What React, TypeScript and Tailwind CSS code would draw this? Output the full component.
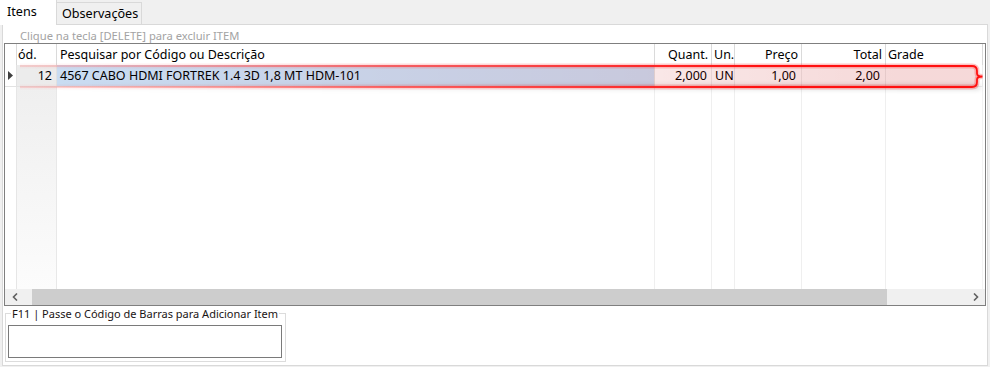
export default function App() {
  return (
    <div className="relative w-[990px] h-[367px] overflow-hidden bg-[#f0f0f0] font-['Noto_Sans',sans-serif] text-[12px] leading-[16px] text-black">
      {/* Tabs */}
      <div className="flex h-[24px] items-end text-[12.6px]">
        <div className="relative z-10 -mb-px h-[25px] w-[57px] bg-white border-r border-[#d9d9d9] pl-[7px] pt-[4px]">Itens</div>
        <div className="h-[22px] w-[85px] border-t border-r border-[#d9d9d9] bg-[#f0f0f0] pl-[5px] pt-[3px]">Observações</div>
      </div>

      {/* Tab page */}
      <div className="ml-[2px] w-[986px] h-[342px] bg-white border border-[#d9d9d9] flex flex-col">
        <div className="h-[18px] pl-[17px] pt-[4px] text-[11.2px] leading-[14px] text-[#a3a3a3]">Clique na tecla [DELETE] para excluir ITEM</div>

        {/* Grid */}
        <div className="ml-[1px] w-[982px] h-[263px] border border-[#7f7f7f] flex flex-col text-[12.5px]">
          {/* header */}
          <div className="flex h-[21px] leading-[21px] bg-white">
            <div className="w-[12px] border-r border-[#dadada]" />
            <div className="w-[40px] border-r border-[#dadada] pl-[1px] overflow-hidden whitespace-nowrap">ód.</div>
            <div className="w-[598px] border-r border-[#dadada] pl-[3px]">Pesquisar por Código ou Descrição</div>
            <div className="w-[57px] border-r border-[#dadada] pr-[3px] text-right">Quant.</div>
            <div className="w-[23px] border-r border-[#dadada] pl-[2px] overflow-hidden whitespace-nowrap">Un.</div>
            <div className="w-[67px] border-r border-[#dadada] pr-[3px] text-right">Preço</div>
            <div className="w-[84px] border-r border-[#dadada] pr-[3px] text-right">Total</div>
            <div className="w-[97px] border-r border-[#dadada] pl-[2px]">Grade</div>
            <div className="flex-1" />
          </div>

          {/* data row */}
          <div className="flex h-[22px] leading-[21px]">
            <div className="w-[12px] border-r border-b border-[#e2e2e2] flex items-center pl-[3px]">
              <svg width="5" height="9" viewBox="0 0 5 9"><path d="M0 0 L5 4.5 L0 9 Z" fill="#404040" /></svg>
            </div>
            <div className="w-[40px] border-r border-b border-[#e2e2e2] bg-[#ececec] pr-[4px] text-right">12</div>
            <div className="w-[598px] border-r border-b border-[#e2e2e2] bg-[#c9ddf3] pl-[3px] whitespace-nowrap">4567 CABO HDMI FORTREK 1.4 3D 1,8 MT HDM-101</div>
            <div className="w-[57px] border-r border-b border-[#ececec] pr-[4px] text-right">2,000</div>
            <div className="w-[23px] border-r border-b border-[#ececec] pl-[3px]">UN</div>
            <div className="w-[67px] border-r border-b border-[#ececec] pr-[5px] text-right">1,00</div>
            <div className="w-[84px] border-r border-b border-[#ececec] pr-[5px] text-right">2,00</div>
            <div className="w-[97px] border-r border-b border-[#ececec]" />
            <div className="flex-1" />
          </div>

          {/* filler */}
          <div className="flex flex-1">
            <div className="w-[12px] border-r border-[#e6e6e6]" />
            <div className="w-[40px] border-r border-[#e8e8e8] bg-gradient-to-b from-[#efefef] to-[#fcfcfc]" />
            <div className="w-[598px] border-r border-[#efefef]" />
            <div className="w-[57px] border-r border-[#efefef]" />
            <div className="w-[23px] border-r border-[#efefef]" />
            <div className="w-[67px] border-r border-[#efefef]" />
            <div className="w-[84px] border-r border-[#efefef]" />
            <div className="w-[97px] border-r border-[#f3f3f3]" />
            <div className="flex-1" />
          </div>

          {/* scrollbar */}
          <div className="flex h-[16px] bg-[#f0f0f0]">
            <div className="w-[27px] flex items-center pl-[7px]">
              <svg width="6" height="8" viewBox="0 0 6 8"><path d="M5 0.5 L1.5 4 L5 7.5" fill="none" stroke="#606060" strokeWidth="1.6" /></svg>
            </div>
            <div className="w-[855px] bg-[#cdcdcd]" />
            <div className="flex-1 flex items-center justify-end pr-[6px]">
              <svg width="6" height="8" viewBox="0 0 6 8"><path d="M1 0.5 L4.5 4 L1 7.5" fill="none" stroke="#606060" strokeWidth="1.6" /></svg>
            </div>
          </div>
        </div>

        {/* Group box */}
        <div className="relative mt-[7px] ml-[2px] w-[281px] h-[49px] border border-[#dcdcdc] pt-[11px] pl-[2px]">
          <span className="absolute -top-[8px] left-[5px] bg-white px-px text-[11px] leading-[16px] text-[#1a1414] whitespace-nowrap">F11 | Passe o Código de Barras para Adicionar Item</span>
          <div className="w-[274px] h-[33px] border border-[#7a7a7a] bg-white" />
        </div>
      </div>

      {/* Red highlight annotation */}
      <svg className="pointer-events-none absolute left-0 top-0" width="990" height="367" viewBox="0 0 990 367">
        <defs>
          <linearGradient id="strokeG" gradientUnits="userSpaceOnUse" x1="20" y1="0" x2="760" y2="0">
            <stop offset="0" stopColor="#ff8080" stopOpacity="0.25" />
            <stop offset="0.5" stopColor="#ff4040" stopOpacity="0.75" />
            <stop offset="1" stopColor="#ff1010" stopOpacity="1" />
          </linearGradient>
          <linearGradient id="fillG" gradientUnits="userSpaceOnUse" x1="20" y1="0" x2="900" y2="0">
            <stop offset="0" stopColor="#c00000" stopOpacity="0" />
            <stop offset="0.7" stopColor="#c00000" stopOpacity="0.09" />
            <stop offset="1" stopColor="#c00000" stopOpacity="0.15" />
          </linearGradient>
          <linearGradient id="shadowG" gradientUnits="userSpaceOnUse" x1="20" y1="0" x2="900" y2="0">
            <stop offset="0" stopColor="#000" stopOpacity="0" />
            <stop offset="1" stopColor="#000" stopOpacity="0.12" />
          </linearGradient>
          <filter id="blur3" x="-10%" y="-100%" width="120%" height="300%">
            <feGaussianBlur stdDeviation="2" />
          </filter>
        </defs>
        <rect x="60" y="84" width="920" height="6" fill="url(#shadowG)" filter="url(#blur3)" />
        <path d="M20 66 H972 Q977 66 977 71 V73.5 Q977 76.5 982.5 76.5 Q977 76.5 977 79.5 V82 Q977 87 972 87 H20 Z" fill="url(#fillG)" stroke="none" />
        <path d="M20 66 H972 Q977 66 977 71 V73.5 Q977 76.5 982.5 76.5 Q977 76.5 977 79.5 V82 Q977 87 972 87 H20" fill="none" stroke="url(#strokeG)" strokeOpacity="0.25" strokeWidth="5" />
        <path d="M20 66 H972 Q977 66 977 71 V73.5 Q977 76.5 982.5 76.5 Q977 76.5 977 79.5 V82 Q977 87 972 87 H20" fill="none" stroke="url(#strokeG)" strokeWidth="1.8" />
      </svg>
    </div>
  );
}
